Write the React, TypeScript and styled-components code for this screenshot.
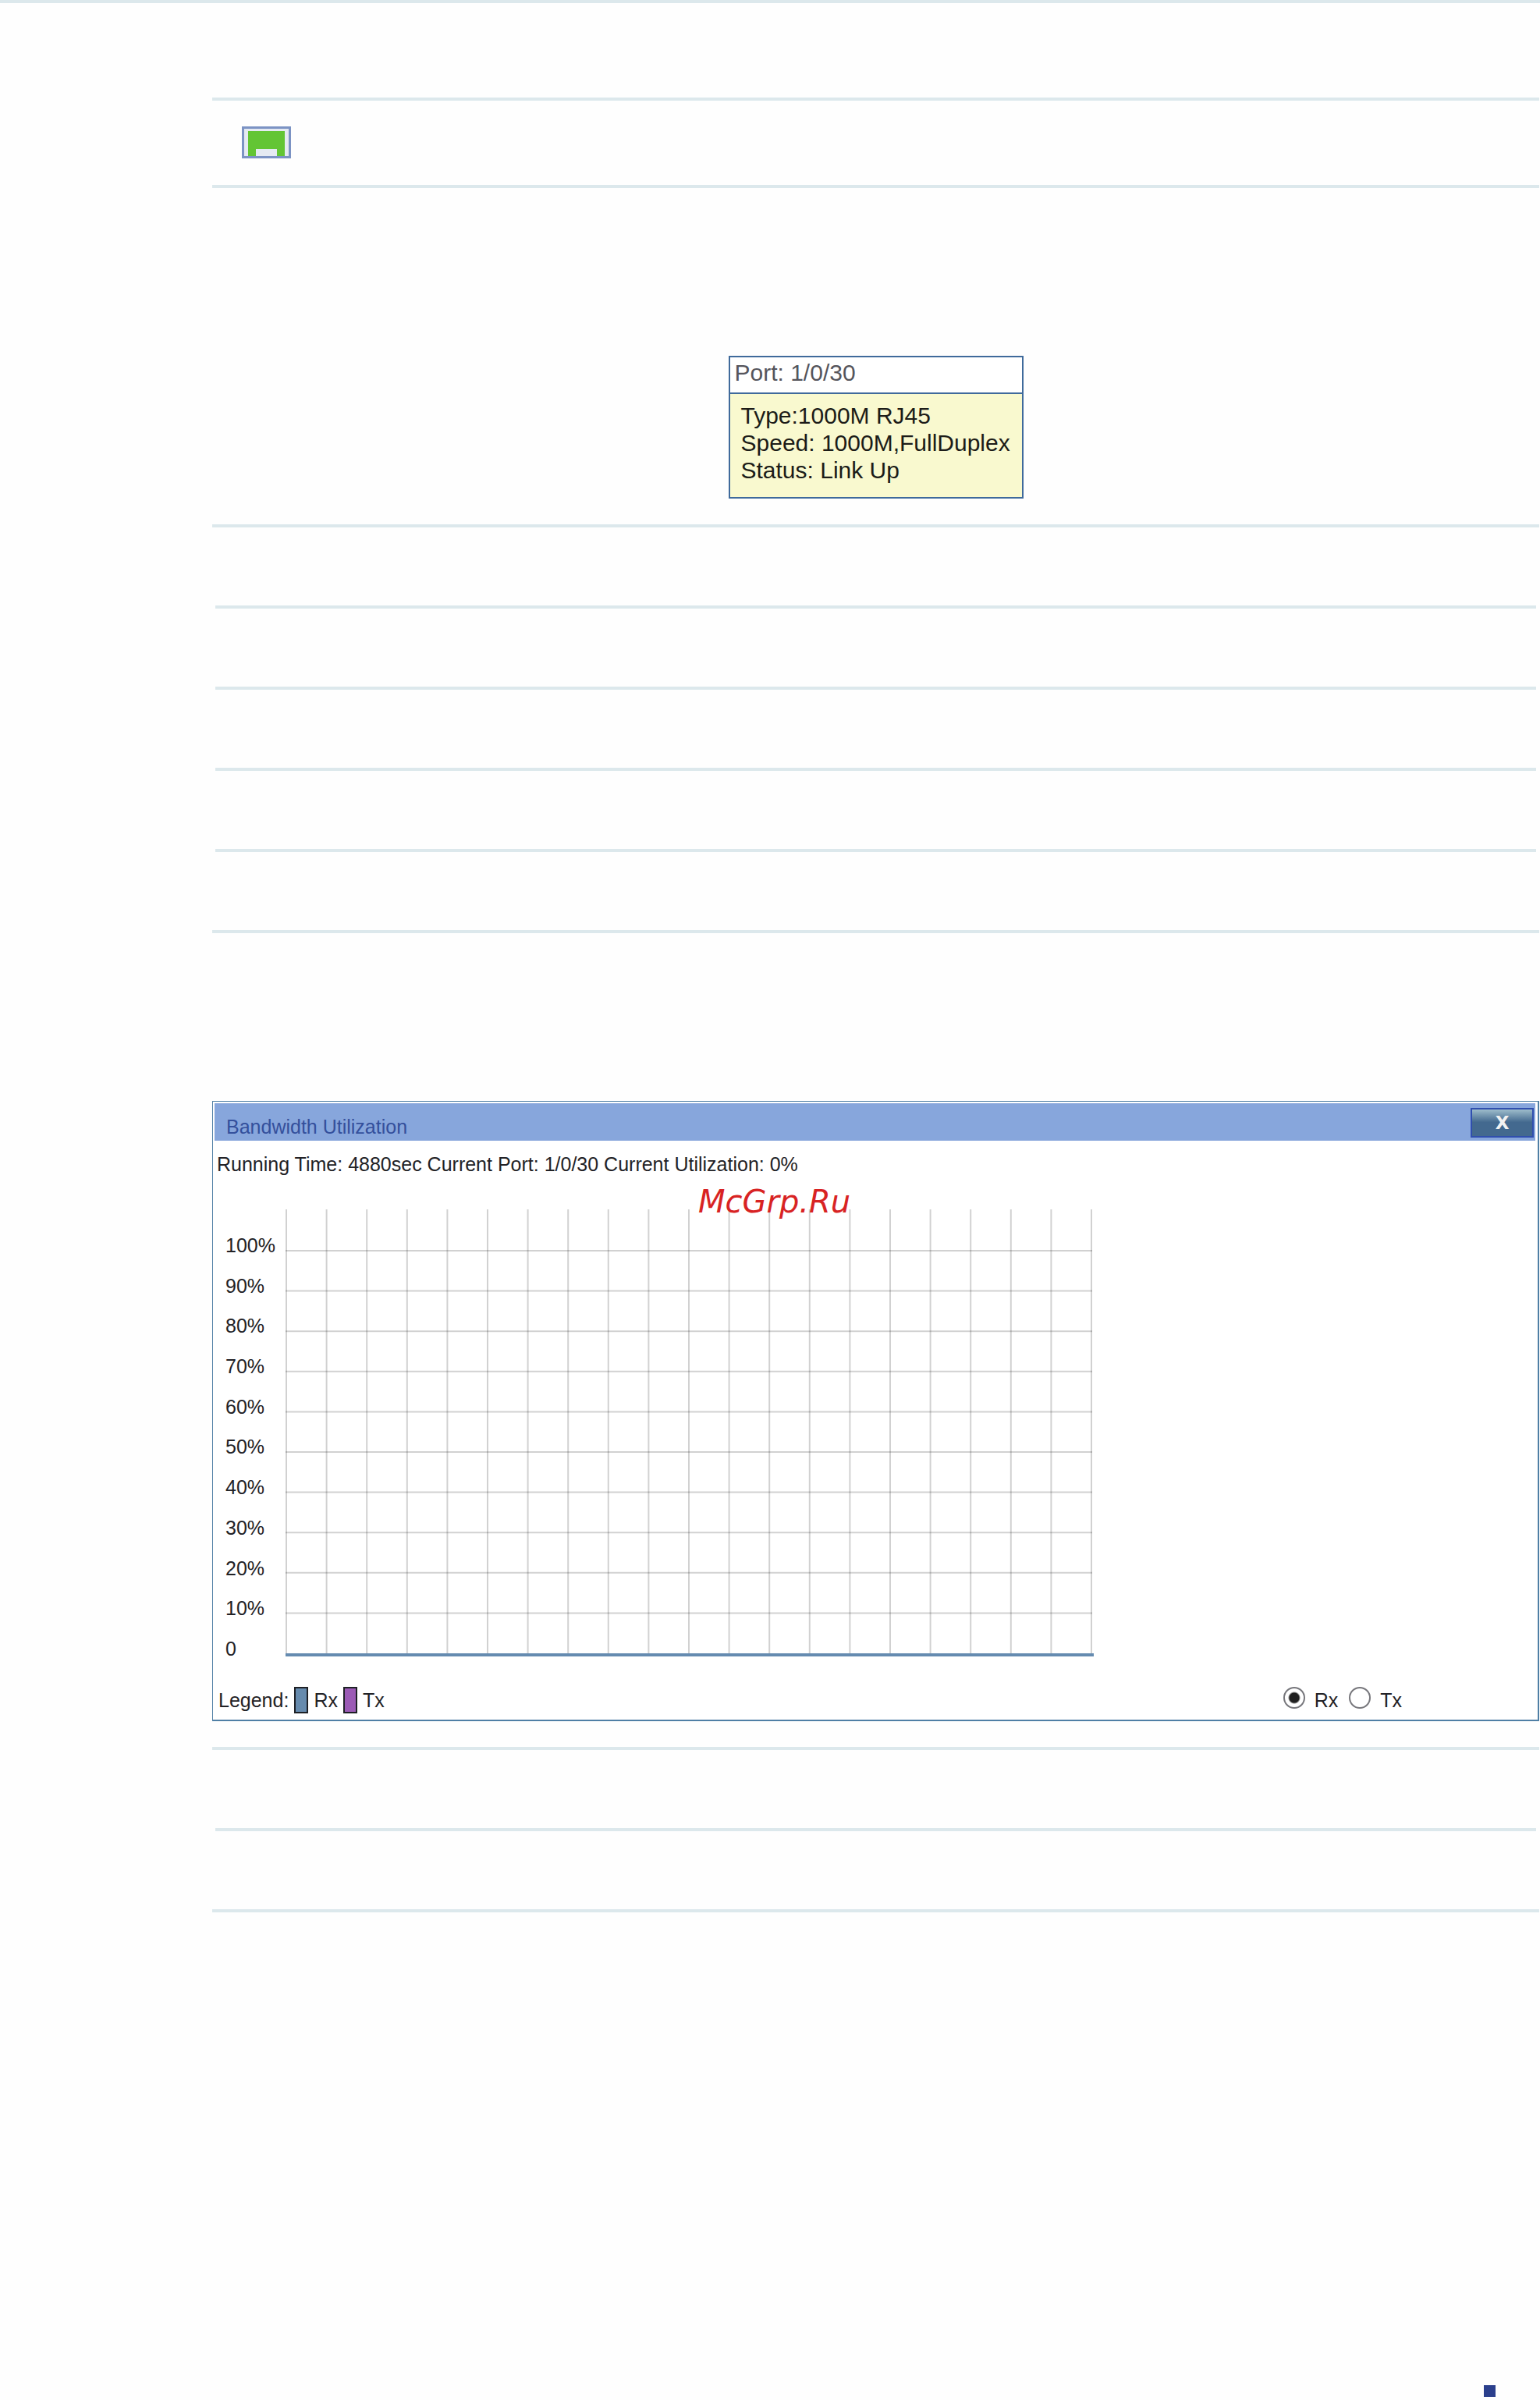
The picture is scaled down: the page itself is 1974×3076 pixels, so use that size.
import React, { useState } from "react";
import styled, { createGlobalStyle } from "styled-components";

const GlobalStyle = createGlobalStyle`
  *, *::before, *::after { box-sizing: border-box; }
  body {
    margin: 0;
    background: #fefefe;
    color: #222226;
    font-family: "Liberation Sans", Arial, sans-serif;
    font-size: 25px;
    line-height: 28px;
  }
`;

const RULE = "4px solid #dce8ec";

const Page = styled.main`
  border-top: ${RULE};
`;

const Content = styled.div`
  padding: 0 1px 0 272px;
`;

const Row = styled.div<{ $height: number; $inset?: boolean }>`
  display: flex;
  align-items: center;
  height: ${(p) => p.$height}px;
  margin: 0 ${(p) => (p.$inset ? 4 : 0)}px;
  padding-left: 38px;
  border-bottom: ${RULE};
`;

const Figure = styled.section`
  display: flex;
  justify-content: center;
  padding: 215px 0 33px;
  border-bottom: ${RULE};
`;

const Tooltip = styled.div`
  width: 378px;
  border: 2px solid #3f6a9b;
  font-size: 30px;
  line-height: 35px;
`;

const TooltipTitle = styled.div`
  padding: 2px 6px 8px;
  border-bottom: 2px solid #3f6a9b;
  background: #ffffff;
  color: #55555c;
`;

const TooltipBody = styled.div`
  padding: 10px 0 17px 14px;
  background: #f9f9cf;
  color: #1c1c18;
  white-space: nowrap;
`;

const Panel = styled.div`
  position: relative;
  flex: 1;
  padding: 2px 3px 8px 2px;
  border: solid #4f7fa5;
  border-width: 1px 2px 2px 1px;
  background: #ffffff;
`;

const TitleBar = styled.header`
  display: flex;
  align-items: flex-end;
  justify-content: space-between;
  height: 48px;
  padding: 0 2px 4px 15px;
  background: #87a6dc;
`;

const Title = styled.h2`
  margin: 0;
  color: #34509c;
  font-size: 25px;
  font-weight: 400;
`;

const CloseButton = styled.button`
  width: 81px;
  height: 38px;
  padding: 0;
  border: 2px solid #304fae;
  background: linear-gradient(#9dbccb 0%, #43698f 48%, #43698f 100%);
  color: #f2f2f2;
  font: bold 23px/28px "DejaVu Sans", Verdana, sans-serif;
`;

const Summary = styled.p`
  margin: 16px 0 44px;
  padding-left: 3px;
`;

const Chart = styled.div`
  display: flex;
  align-items: flex-start;
  padding-left: 14px;
`;

const Ticks = styled.div`
  display: flex;
  flex-direction: column;
  justify-content: space-between;
  width: 77px;
  height: 577px;
  padding-top: 32px;
`;

const PanelFooter = styled.footer`
  display: flex;
  align-items: center;
  justify-content: space-between;
  margin-top: 35px;
  padding: 0 171px 0 5px;
  line-height: 34px;
`;

const Legend = styled.div`
  display: flex;
  gap: 7px;
`;

const LegendItem = styled.span`
  display: flex;
  gap: 7px;
`;

const Swatch = styled.i<{ $color: string }>`
  width: 18px;
  height: 34px;
  border: 2px solid #1e2126;
  background: ${(p) => p.$color};
`;

const Choices = styled.div`
  display: flex;
  gap: 14px;
`;

const Choice = styled.label`
  display: flex;
  gap: 12px;
`;

const Radio = styled.input`
  appearance: none;
  width: 28px;
  height: 28px;
  margin: 0;
  border: 2px solid #77777c;
  border-radius: 50%;
  background: #ffffff;

  &:checked {
    background: radial-gradient(circle, #202020 6px, #ffffff 8px);
  }
`;

const Watermark = styled.span`
  position: absolute;
  top: 104px;
  left: 622px;
  color: #d82323;
  font: italic 40px/48px "DejaVu Sans", Verdana, sans-serif;
`;

const PageFooter = styled.footer`
  display: flex;
  justify-content: flex-end;
  padding: 606px 57px 4px 0;
`;

const Marker = styled.i`
  width: 15px;
  height: 15px;
  background: #2b3f8c;
`;

const ticks = ["100%", "90%", "80%", "70%", "60%", "50%", "40%", "30%", "20%", "10%", "0"];
const CELL = 51.6;

function PortIcon() {
  return (
    <svg width="63" height="42" viewBox="0 0 63 42" role="img" aria-label="Port linked">
      <rect x="1.5" y="1.5" width="60" height="38" fill="#e5eaf2" stroke="#7c93c4" strokeWidth="3" />
      <path d="M8 6H55V38H45V29H18V38H8Z" fill="#63c534" />
    </svg>
  );
}

function Grid() {
  return (
    <svg width="1036" height="573" viewBox="0 0 1036 573" aria-hidden="true">
      <g stroke="#000000" strokeOpacity="0.18" strokeWidth="2">
        {Array.from({ length: 21 }, (_, i) => (
          <line key={i} x1={1 + i * CELL} x2={1 + i * CELL} y1={0} y2={569} />
        ))}
        {Array.from({ length: 10 }, (_, i) => (
          <line key={i} x1={0} x2={1034} y1={53 + i * CELL} y2={53 + i * CELL} />
        ))}
      </g>
      <rect x="0" y="569" width="1036" height="4" fill="#658bb0" />
    </svg>
  );
}

export default function App() {
  const [direction, setDirection] = useState("Rx");
  return (
    <>
      <GlobalStyle />
      <Page>
        <Content>
          <Row $height={125} />
          <Row $height={112}>
            <PortIcon />
          </Row>
          <Figure>
            <Tooltip>
              <TooltipTitle>Port: 1/0/30</TooltipTitle>
              <TooltipBody>
                <div>Type:1000M RJ45</div>
                <div>Speed: 1000M,FullDuplex</div>
                <div>Status: Link Up</div>
              </TooltipBody>
            </Tooltip>
          </Figure>
          <Row $height={104} $inset />
          <Row $height={104} $inset />
          <Row $height={104} $inset />
          <Row $height={104} $inset />
          <Row $height={104} />
          <Figure>
            <Panel>
              <TitleBar>
                <Title>Bandwidth Utilization</Title>
                <CloseButton type="button">X</CloseButton>
              </TitleBar>
              <Summary>
                Running Time: 4880sec Current Port: 1/0/30 Current Utilization: 0%
              </Summary>
              <Chart>
                <Ticks>
                  {ticks.map((t) => (
                    <span key={t}>{t}</span>
                  ))}
                </Ticks>
                <Grid />
              </Chart>
              <PanelFooter>
                <Legend>
                  <span>Legend:</span>
                  <LegendItem>
                    <Swatch $color="#668bae" />
                    Rx
                  </LegendItem>
                  <LegendItem>
                    <Swatch $color="#9b5bb5" />
                    Tx
                  </LegendItem>
                </Legend>
                <Choices>
                  {["Rx", "Tx"].map((d) => (
                    <Choice key={d}>
                      <Radio
                        type="radio"
                        name="direction"
                        value={d}
                        checked={direction === d}
                        onChange={() => setDirection(d)}
                      />
                      {d}
                    </Choice>
                  ))}
                </Choices>
              </PanelFooter>
              <Watermark>McGrp.Ru</Watermark>
            </Panel>
          </Figure>
          <Row $height={104} $inset />
          <Row $height={104} />
        </Content>
        <PageFooter>
          <Marker />
        </PageFooter>
      </Page>
    </>
  );
}
